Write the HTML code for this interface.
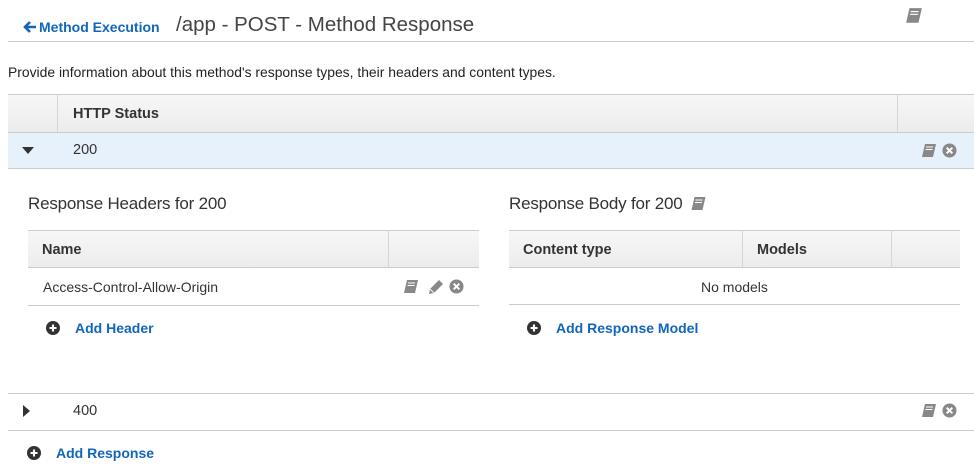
<!DOCTYPE html>
<html><head><style>
body{margin:0;width:974px;height:466px;position:relative;background:#fff;font-family:"Liberation Sans",sans-serif;color:#333;overflow:hidden}
.a{position:absolute}
.hd{background:linear-gradient(#f7f7f7,#ececec);border-top:1px solid #ccc;border-bottom:1px solid #ccc;box-sizing:border-box}
.b{font-weight:bold;font-size:14.5px;color:#333}
.lnk{color:#1166bb;font-weight:bold;font-size:14px}
.ic{position:absolute}
.vl{position:absolute;top:0;bottom:0;width:1px;background:#d5d5d5}
.h{font-size:17px;color:#333;letter-spacing:-0.2px}
</style></head><body>
<svg class="ic" style="left:23px;top:20px" width="14" height="14" viewBox="0 0 14 14"><path d="M7 2 2 7 7 12M2 7H13" stroke="#1166bb" stroke-width="2.6" fill="none"/></svg>
<div class="a lnk" style="left:39px;top:19px">Method Execution</div>
<div class="a" style="left:176px;top:13px;font-size:20.5px;color:#444">/app - POST - Method Response</div>
<svg class="ic" style="left:905px;top:7px" width="18" height="18" viewBox="0 0 16 16"><path d="M4 1h11l-3 13H1z" fill="#888"/><path d="M5 4h7M4.5 6.5h7" stroke="#fff" stroke-width="1"/></svg>
<div class="a" style="left:8px;top:41px;width:966px;height:1px;background:#ccc"></div>
<div class="a" style="left:8px;top:64px;font-size:13.9px;color:#222">Provide information about this method's response types, their headers and content types.</div>

<div class="a hd" style="left:8px;top:94px;width:966px;height:39px"><div class="vl" style="left:49px"></div><div class="vl" style="left:889px"></div><div class="a b" style="left:65px;top:11px">HTTP Status</div></div>
<div class="a" style="left:8px;top:133px;width:966px;height:35px;background:#e6f1fb;border-bottom:1px solid #ccc"></div>
<svg class="ic" style="left:22px;top:147px" width="12" height="8"><path d="M0 0h12L6 7z" fill="#333"/></svg>
<div class="a" style="left:73px;top:142px;font-size:14.5px">200</div>
<svg class="ic" style="left:921px;top:143px" width="16" height="16" viewBox="0 0 16 16"><path d="M4 1h11l-3 13H1z" fill="#888"/><path d="M5 4h7M4.5 6.5h7" stroke="#fff"/></svg>
<svg class="ic" style="left:942px;top:143px" width="15" height="15" viewBox="0 0 16 16"><circle cx="8" cy="8" r="7.5" fill="#888"/><path d="M5 5l6 6M11 5l-6 6" stroke="#fff" stroke-width="2.2"/></svg>

<div class="a h" style="left:28px;top:194px">Response Headers for 200</div>
<div class="a hd" style="left:28px;top:230px;width:451px;height:38px"><div class="vl" style="left:360px"></div><div class="a b" style="left:14px;top:11px">Name</div></div>
<div class="a" style="left:28px;top:268px;width:451px;height:37px;border-bottom:1px solid #ccc"></div>
<div class="a" style="left:43px;top:279px;font-size:14px">Access-Control-Allow-Origin</div>
<svg class="ic" style="left:403px;top:279px" width="16" height="16" viewBox="0 0 16 16"><path d="M4 1h11l-3 13H1z" fill="#888"/><path d="M5 4h7M4.5 6.5h7" stroke="#fff"/></svg>
<svg class="ic" style="left:428px;top:279px" width="16" height="16" viewBox="0 0 16 16"><path d="M11 1l4 4-9 9-5 1 1-5z" fill="#888"/><path d="M2 10l4 4" stroke="#fff"/></svg>
<svg class="ic" style="left:449px;top:279px" width="15" height="15" viewBox="0 0 16 16"><circle cx="8" cy="8" r="7.5" fill="#888"/><path d="M5 5l6 6M11 5l-6 6" stroke="#fff" stroke-width="2.2"/></svg>
<svg class="ic" style="left:46px;top:321px" width="14" height="14" viewBox="0 0 16 16"><circle cx="8" cy="8" r="8" fill="#333"/><path d="M8 4v8M4 8h8" stroke="#fff" stroke-width="2.4"/></svg>
<div class="a lnk" style="left:75px;top:320px">Add Header</div>

<div class="a h" style="left:509px;top:194px">Response Body for 200</div>
<svg class="ic" style="left:690px;top:196px" width="17" height="16" viewBox="0 0 16 16"><path d="M4 1h11l-3 13H1z" fill="#888"/><path d="M5 4h7M4.5 6.5h7" stroke="#fff"/></svg>
<div class="a hd" style="left:509px;top:230px;width:451px;height:38px"><div class="vl" style="left:233px"></div><div class="vl" style="left:382px"></div><div class="a b" style="left:14px;top:11px">Content type</div><div class="a b" style="left:248px;top:11px">Models</div></div>
<div class="a" style="left:509px;top:268px;width:451px;height:36px;border-bottom:1px solid #ccc"></div>
<div class="a" style="left:701px;top:279px;font-size:14px">No models</div>
<svg class="ic" style="left:527px;top:321px" width="14" height="14" viewBox="0 0 16 16"><circle cx="8" cy="8" r="8" fill="#333"/><path d="M8 4v8M4 8h8" stroke="#fff" stroke-width="2.4"/></svg>
<div class="a lnk" style="left:556px;top:320px">Add Response Model</div>

<div class="a" style="left:8px;top:393px;width:966px;height:36px;border-top:1px solid #ccc;border-bottom:1px solid #ccc"></div>
<svg class="ic" style="left:23px;top:405px" width="8" height="12"><path d="M0 0v12l7-6z" fill="#333"/></svg>
<div class="a" style="left:73px;top:403px;font-size:14.5px">400</div>
<svg class="ic" style="left:921px;top:403px" width="16" height="16" viewBox="0 0 16 16"><path d="M4 1h11l-3 13H1z" fill="#888"/><path d="M5 4h7M4.5 6.5h7" stroke="#fff"/></svg>
<svg class="ic" style="left:942px;top:403px" width="15" height="15" viewBox="0 0 16 16"><circle cx="8" cy="8" r="7.5" fill="#888"/><path d="M5 5l6 6M11 5l-6 6" stroke="#fff" stroke-width="2.2"/></svg>
<svg class="ic" style="left:27px;top:446px" width="14" height="14" viewBox="0 0 16 16"><circle cx="8" cy="8" r="8" fill="#333"/><path d="M8 4v8M4 8h8" stroke="#fff" stroke-width="2.4"/></svg>
<div class="a lnk" style="left:56px;top:445px">Add Response</div>
</body></html>
